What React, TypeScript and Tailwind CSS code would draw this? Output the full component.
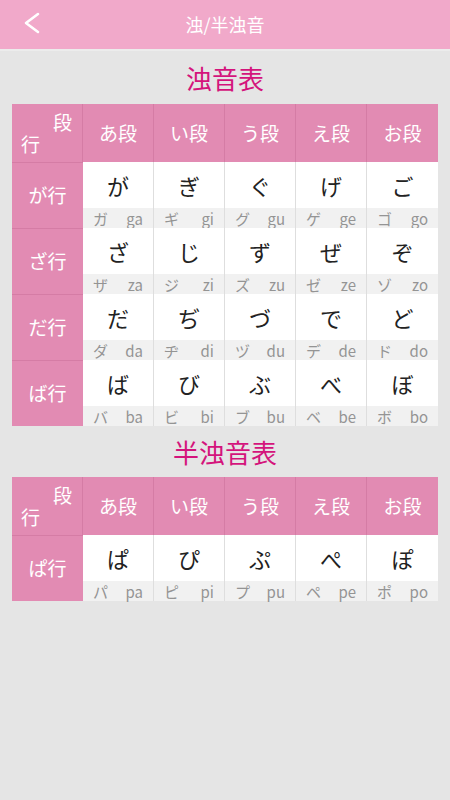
const cols = ["あ段", "い段", "う段", "え段", "お段"];

const dakuon = [
  { row: "が行", cells: [["が", "ガ", "ga"], ["ぎ", "ギ", "gi"], ["ぐ", "グ", "gu"], ["げ", "ゲ", "ge"], ["ご", "ゴ", "go"]] },
  { row: "ざ行", cells: [["ざ", "ザ", "za"], ["じ", "ジ", "zi"], ["ず", "ズ", "zu"], ["ぜ", "ゼ", "ze"], ["ぞ", "ゾ", "zo"]] },
  { row: "だ行", cells: [["だ", "ダ", "da"], ["ぢ", "ヂ", "di"], ["づ", "ヅ", "du"], ["で", "デ", "de"], ["ど", "ド", "do"]] },
  { row: "ば行", cells: [["ば", "バ", "ba"], ["び", "ビ", "bi"], ["ぶ", "ブ", "bu"], ["べ", "ベ", "be"], ["ぼ", "ボ", "bo"]] },
];

const handakuon = [
  { row: "ぱ行", cells: [["ぱ", "パ", "pa"], ["ぴ", "ピ", "pi"], ["ぷ", "プ", "pu"], ["ぺ", "ペ", "pe"], ["ぽ", "ポ", "po"]] },
];

function KanaTable({ rows }: { rows: { row: string; cells: string[][] }[] }) {
  return (
    <div className="mx-[12px] w-[426px]">
      <div className="flex h-[58px] bg-[#e28bb3] text-white">
        <div className="relative w-[71px] border-r border-[#d57ca5]">
          <span className="absolute right-[10px] top-[4px] text-[19px]">段</span>
          <span className="absolute left-[9px] bottom-[4px] text-[19px]">行</span>
        </div>
        {cols.map((c, i) => (
          <div key={c} className={`flex w-[71px] items-center justify-center text-[19px] ${i < 4 ? "border-r border-[#d57ca5]" : ""}`}>
            {c}
          </div>
        ))}
      </div>
      {rows.map((r) => (
        <div key={r.row} className="flex h-[66px]">
          <div className="flex w-[71px] items-center justify-center border-t border-[#d57ca5] bg-[#e28bb3] text-[19px] text-white">
            {r.row}
          </div>
          {r.cells.map((c, i) => (
            <div key={c[0]} className={`flex w-[71px] flex-col ${i < 4 ? "border-r border-[#dedede]" : ""}`}>
              <div className="flex h-[46px] items-center justify-center bg-white text-[22px] text-[#222]">{c[0]}</div>
              <div className="flex h-[20px] items-center justify-between bg-[#f1f1f1] px-[10px] text-[15px] leading-none text-[#949494]">
                <span>{c[1]}</span>
                <span>{c[2]}</span>
              </div>
            </div>
          ))}
        </div>
      ))}
    </div>
  );
}

export default function App() {
  return (
    <div className="min-h-[800px] w-[450px] bg-[#e5e5e5]" style={{ fontFamily: '"Noto Sans CJK JP", "Noto Sans", sans-serif' }}>
      <div className="relative flex h-[51px] items-center justify-center border-b-2 border-[#ececec] bg-[#f1a9ca]">
        <svg className="absolute left-[23px] top-[12px]" width="17" height="22" viewBox="0 0 17 22" fill="none">
          <polyline points="15,2 3,11 15,20" stroke="white" strokeWidth="2.6" strokeLinecap="round" strokeLinejoin="round" />
        </svg>
        <span className="text-[18px] text-white">浊/半浊音</span>
      </div>
      <div className="flex h-[53px] items-center justify-center text-[26px] text-[#d4147c]">浊音表</div>
      <KanaTable rows={dakuon} />
      <div className="flex h-[51px] items-center justify-center text-[26px] text-[#d4147c]">半浊音表</div>
      <KanaTable rows={handakuon} />
    </div>
  );
}
